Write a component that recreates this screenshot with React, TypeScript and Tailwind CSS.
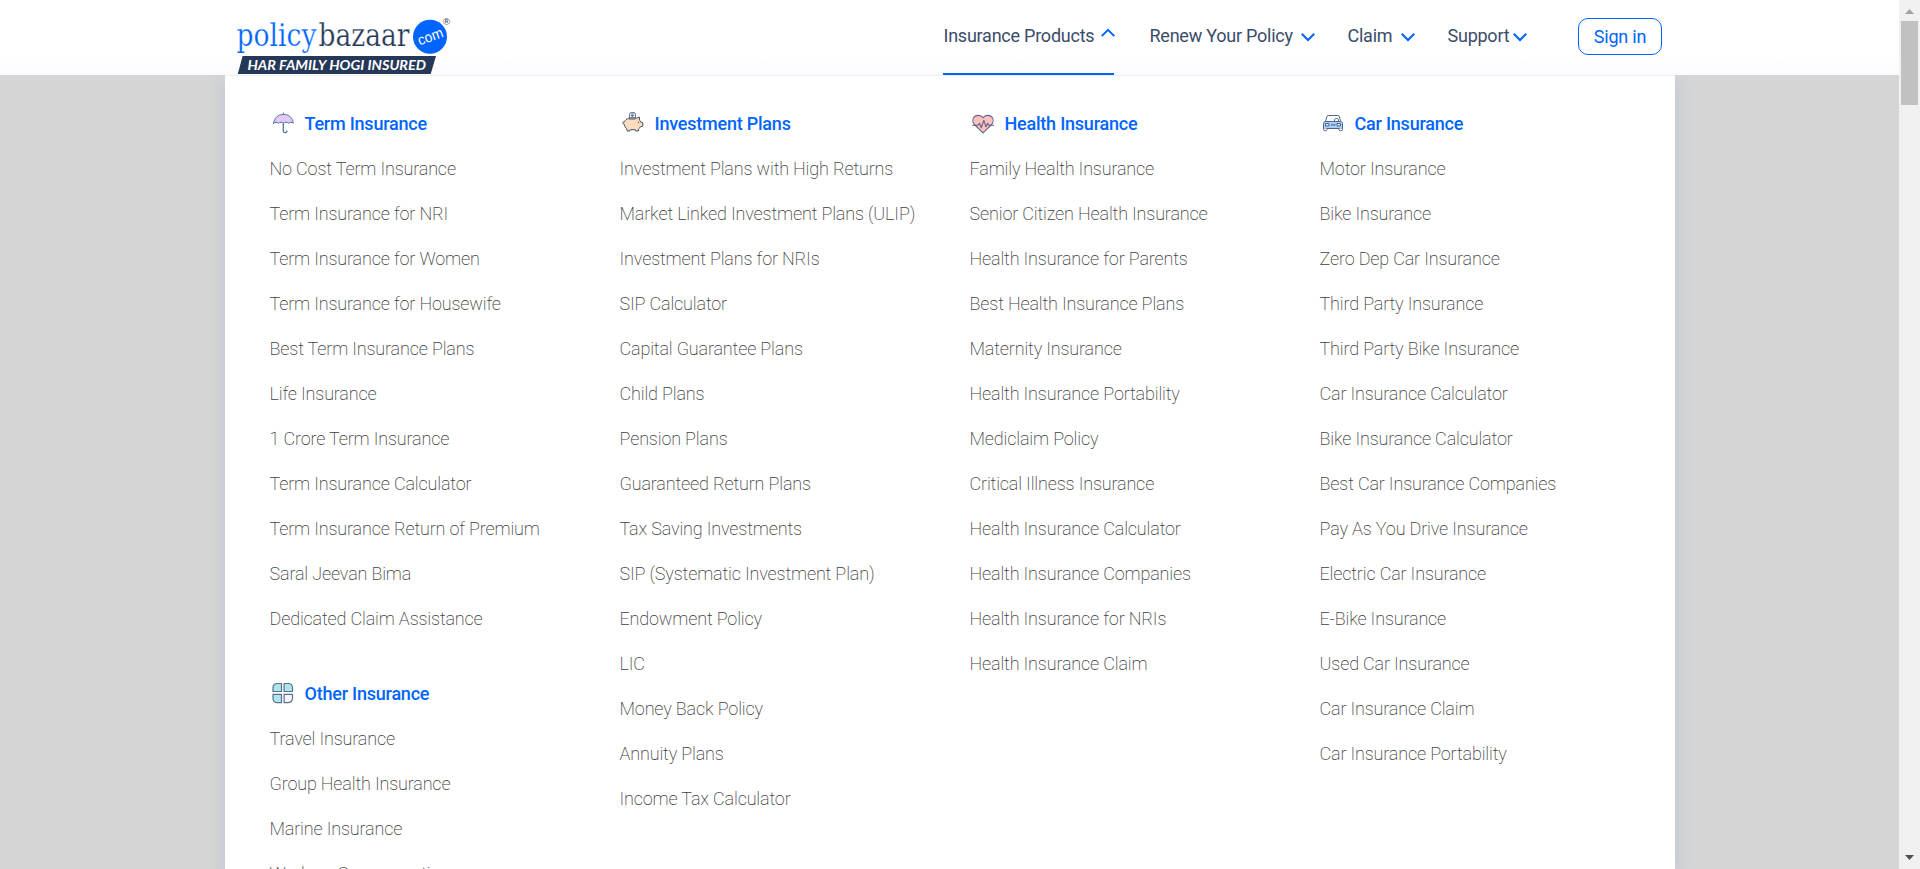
import React from "react";

type Section = { title: string; icon: React.ReactNode; links: string[] };

const navy = "#42526e";

const UmbrellaIcon = () => (
  <svg width="22" height="22" viewBox="0 0 22 22" fill="none" stroke="#5b6f99" strokeWidth="1" strokeLinecap="round" strokeLinejoin="round">
    <path d="M11.500 1v1.400" />
    <path d="M1.700 11.200C2.100 5.800 6.200 2.400 11.500 2.400s9.400 3.400 9.800 8.800c-1.500-1.300-3.200-1.300-4.800 0-1.600-1.300-3.400-1.300-5 0-1.600-1.300-3.400-1.300-5 0-1.600-1.300-3.300-1.300-4.800 0z" fill="#e2cbfb" />
    <path d="M11.300 11.500v7.200c0 2.500 3.600 2.500 3.600.2" strokeWidth="1.300" />
  </svg>
);

const PiggyIcon = () => (
  <svg width="22" height="22" viewBox="0 0 22 22" fill="none" stroke={navy} strokeWidth="1" strokeLinejoin="round">
    <rect x="7.500" y="0.500" width="6" height="6.500" rx="2" fill="#eef3fb" stroke="#60759b" />
    <path d="M9 2h3M9 3.500h3M9.600 3.700l1.700 1.900" strokeWidth=".8" />
    <path d="M4 7.700C5.600 6.200 8 5.700 10.300 5.700c1.500 0 2.600.2 3.700.7L17.300 5l.3 3.200c.7.700 1 1.200 1.300 2l1.900.4v3.600l-2.200.5c-.6.900-1.100 1.500-1.900 2.100l-.3 2.200h-2.600l-.5-1.300H8.300l-.6 1.300H5.200l-.5-2.300c-1.300-1-2.100-2.200-2.300-4.200-1.100-.2-1.600-.9-1.500-2 .1-.9.700-1 1.500-.6.300-.9.900-1.600 1.600-2.200z" fill="#fddcbd" />
    <path d="M6.800 7h6.400" />
    <circle cx="16.500" cy="10.300" r=".7" fill={navy} stroke="none" />
  </svg>
);

const HeartIcon = () => (
  <svg width="22" height="22" viewBox="0 0 22 22" fill="none" stroke="#5e6685" strokeWidth="1.100" strokeLinejoin="round" strokeLinecap="round">
    <path d="M11 20.800 2.300 12.500C.5 10.300.4 7 2 5.100c2.300-2.500 6.500-2.200 9 .6 2.500-2.800 6.700-3.100 9-.6 1.600 1.900 1.500 5.200-.3 7.400z" fill="#fdc1c1" />
    <path d="M.6 13.200h5.600l1.300-2 1.800 4.600 2.600-7.500 2 6.500 1.800-3.600 1 2h4.700" />
  </svg>
);

const CarIcon = () => (
  <svg width="22" height="22" viewBox="0 0 22 22" fill="none" stroke="#4e668c" strokeWidth="1" strokeLinejoin="round">
    <path d="M3.500 9.500 5 4.200c.2-.5.500-.7 1.100-.7h10c.6 0 .9.200 1.100.7l1.500 5.300" fill="#fff" />
    <path d="M12.500 9V7.500c0-1.300 4-1.300 4 0V9" />
    <path d="M1.500 17v-5.500c0-1.200.8-2 2-2h15c1.200 0 2 .8 2 2V17" fill="#a9cff5" />
    <path d="M1.500 16.500h19" />
    <rect x="3.500" y="11.500" width="3.500" height="2.500" fill="#dcecff" />
    <rect x="15" y="11.500" width="3.500" height="2.500" fill="#dcecff" />
    <path d="M9 12.900h4.500" strokeWidth="1.200" />
    <path d="M1.500 16.500v1.200c0 1.500 3.500 1.500 3.500 0v-1.200M17 16.500v1.200c0 1.500 3.500 1.500 3.500 0v-1.200" fill="#fff" />
  </svg>
);

const PetalsIcon = () => (
  <svg width="22" height="22" viewBox="0 0 22 22" stroke="#5b708a" strokeWidth="1.200" strokeLinejoin="round">
    <path d="M5.500 1.500h4v8h-8.500V6c0-2.700 1.700-4.500 4.500-4.500z" fill="#ace7ec" />
    <path d="M16 1.500h-3.900v8h8.400V6c0-2.700-1.700-4.500-4.500-4.500z" fill="#ace7ec" />
    <path d="M5.500 20.700h4v-8.400h-8.500v3.900c0 2.700 1.700 4.500 4.500 4.500z" fill="#ace7ec" />
    <path d="M15.500 20.700h-3.400v-8.400h8.400v3.400c0 3-2 5-5 5z" fill="#f7f7fb" />
  </svg>
);

const columns: Section[][] = [
  [
    {
      title: "Term Insurance",
      icon: <UmbrellaIcon />,
      links: ["No Cost Term Insurance", "Term Insurance for NRI", "Term Insurance for Women", "Term Insurance for Housewife", "Best Term Insurance Plans", "Life Insurance", "1 Crore Term Insurance", "Term Insurance Calculator", "Term Insurance Return of Premium", "Saral Jeevan Bima", "Dedicated Claim Assistance"],
    },
    {
      title: "Other Insurance",
      icon: <PetalsIcon />,
      links: ["Travel Insurance", "Group Health Insurance", "Marine Insurance", "Workers Compensation"],
    },
  ],
  [
    {
      title: "Investment Plans",
      icon: <PiggyIcon />,
      links: ["Investment Plans with High Returns", "Market Linked Investment Plans (ULIP)", "Investment Plans for NRIs", "SIP Calculator", "Capital Guarantee Plans", "Child Plans", "Pension Plans", "Guaranteed Return Plans", "Tax Saving Investments", "SIP (Systematic Investment Plan)", "Endowment Policy", "LIC", "Money Back Policy", "Annuity Plans", "Income Tax Calculator"],
    },
  ],
  [
    {
      title: "Health Insurance",
      icon: <HeartIcon />,
      links: ["Family Health Insurance", "Senior Citizen Health Insurance", "Health Insurance for Parents", "Best Health Insurance Plans", "Maternity Insurance", "Health Insurance Portability", "Mediclaim Policy", "Critical Illness Insurance", "Health Insurance Calculator", "Health Insurance Companies", "Health Insurance for NRIs", "Health Insurance Claim"],
    },
  ],
  [
    {
      title: "Car Insurance",
      icon: <CarIcon />,
      links: ["Motor Insurance", "Bike Insurance", "Zero Dep Car Insurance", "Third Party Insurance", "Third Party Bike Insurance", "Car Insurance Calculator", "Bike Insurance Calculator", "Best Car Insurance Companies", "Pay As You Drive Insurance", "Electric Car Insurance", "E-Bike Insurance", "Used Car Insurance", "Car Insurance Claim", "Car Insurance Portability"],
    },
  ],
];

const Logo = () => (
  <svg width="225" height="75" viewBox="230 0 225 75" className="shrink-0">
    <g fontFamily="'DejaVu Serif Condensed', 'DejaVu Serif', serif" fontStretch="condensed" fontSize="31.500" stroke="#fff" strokeWidth=".25">
      <text x="236.500" y="45.700" fill="#0065ff" textLength="80" lengthAdjust="spacingAndGlyphs">policy</text>
      <text x="318.500" y="45.700" fill="#253858" textLength="91" lengthAdjust="spacingAndGlyphs">bazaar</text>
    </g>
    <circle cx="430" cy="36.700" r="17" fill="#0065ff" />
    <text x="430.500" y="41.500" fill="#fff" fontFamily="'Liberation Sans', sans-serif" fontSize="14.500" textAnchor="middle" textLength="26" lengthAdjust="spacingAndGlyphs" transform="rotate(-20 430 37)">com</text>
    <text x="443" y="25" fill="#253858" fontFamily="'Liberation Sans', sans-serif" fontSize="9.500">®</text>
    <path d="M242.600 56H436l-5.300 18H237.800z" fill="#253858" />
    <text x="247.500" y="69.600" fill="#fff" fontFamily="Lato, sans-serif" fontWeight="700" fontStyle="italic" fontSize="13" textLength="178.500" lengthAdjust="spacingAndGlyphs">HAR FAMILY HOGI INSURED</text>
  </svg>
);

const Chevron = ({ up = false }: { up?: boolean }) => (
  <svg width="14" height="9" viewBox="0 0 14 9" fill="none" stroke="#0065ff" strokeWidth="2" className="shrink-0">
    <path d={up ? "M.7 8.100 7 1.800l6.300 6.300" : "M.7.7 7 7l6.300-6.300"} />
  </svg>
);

const navText = "text-lg leading-6 tracking-[-0.24px] text-[#3b4c6a] whitespace-nowrap";

const Header = () => (
  <header className="relative z-10 flex h-[75px] shrink-0 bg-linear-to-b from-white from-75% to-[#fafbfd] pl-[230px]">
    <Logo />
    <nav className="ml-[488px] flex items-start">
      <div className="flex h-[75px] w-[171px] border-b-2 border-[#0065ff] pt-6 pl-[0.5px]">
        <span className={`${navText} w-[152.5px]`}>Insurance Products</span>
        <span className="ml-[7px] pt-1"><Chevron up /></span>
      </div>
      <div className="ml-[35px] flex w-[166px] pt-6 pl-[0.5px]">
        <span className={`${navText} w-[151.5px]`}>Renew Your Policy</span>
        <span className="pt-[9px]"><Chevron /></span>
      </div>
      <div className="ml-[32px] flex w-[68px] pt-6 pl-[0.5px]">
        <span className={`${navText} w-[53.5px]`}>Claim</span>
        <span className="pt-[9px]"><Chevron /></span>
      </div>
      <div className="ml-[32px] flex w-[80px] pt-6 pl-[0.5px]">
        <span className={`${navText} w-[65.5px]`}>Support</span>
        <span className="pt-[9px]"><Chevron /></span>
      </div>
      <button className="mt-[18px] ml-[51px] flex h-[37px] w-[84px] items-center justify-center rounded-[10px] border border-[#0065ff] text-lg leading-6 tracking-[-0.2px] text-[#0065ff]">
        Sign in
      </button>
    </nav>
  </header>
);

const Scrollbar = () => (
  <div className="flex w-[21px] shrink-0 flex-col items-center justify-between bg-[#f1f1f1] pb-[9px]">
    <div className="flex flex-col items-center">
      <svg width="9" height="5" viewBox="0 0 9 5" className="mt-[9px]"><path d="M0 5 4.500 0 9 5z" fill="#a3a3a3" /></svg>
      <div className="mt-[7px] h-[84px] w-[17px] bg-[#c1c1c1]" />
    </div>
    <svg width="9" height="5" viewBox="0 0 9 5"><path d="M0 0 4.500 5 9 0z" fill="#505050" /></svg>
  </div>
);

export default function App() {
  return (
    <div className="flex h-[869px] w-[1920px] overflow-hidden bg-[#d5d5d5] font-['Roboto',sans-serif]">
      <div className="flex w-[1899px] flex-col overflow-hidden">
        <Header />
        <main className="ml-[225px] grid h-[794px] w-[1450px] shrink-0 grid-cols-[350px_350px_350px_350px] items-start border-t border-[#f0f0f0] bg-white pt-[25px] pl-[44.500px] shadow-[0_6px_16px_0_rgba(52,105,203,0.16)]">
          {columns.map((sections, i) => (
            <div key={i} className="flex flex-col gap-[30px]">
              {sections.map((section) => (
                <section key={section.title}>
                  <h2 className="flex h-[45px] items-center text-lg font-medium tracking-[-0.22px] text-[#0065ff]">
                    <span className="mb-px ml-[2.500px] w-[32.500px]">{section.icon}</span>
                    {section.title}
                  </h2>
                  <ul>
                    {section.links.map((link) => (
                      <li key={link} className="flex h-[45px] items-center text-lg font-extralight tracking-[-0.16px] whitespace-nowrap text-[#414141]">
                        {link}
                      </li>
                    ))}
                  </ul>
                </section>
              ))}
            </div>
          ))}
        </main>
      </div>
      <Scrollbar />
    </div>
  );
}
